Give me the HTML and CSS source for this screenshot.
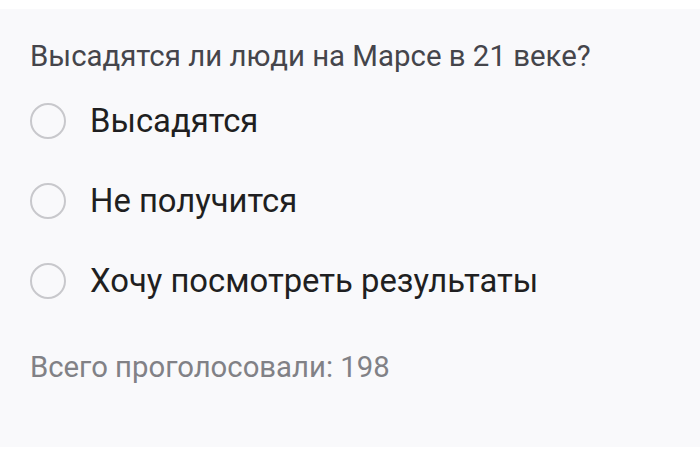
FILE: index.html
```html
<!DOCTYPE html>
<html lang="ru">
<head>
<meta charset="utf-8">
<link rel="stylesheet" href="styles.css">
</head>
<body>
<div class="poll">
  <div class="question">Высадятся ли люди на Марсе в 21 веке?</div>
  <div class="options">
    <div class="option"><span class="radio"></span><span class="label">Высадятся</span></div>
    <div class="option"><span class="radio"></span><span class="label">Не получится</span></div>
    <div class="option"><span class="radio"></span><span class="label">Хочу посмотреть результаты</span></div>
  </div>
  <div class="total">Всего проголосовали: 198</div>
</div>
</body>
</html>
```
FILE: styles.css
```css
html, body {
  margin: 0;
  padding: 0;
  background: #ffffff;
}
body {
  font-family: Roboto, "Noto Sans", sans-serif;
}
.poll {
  margin-top: 9px;
  height: 438px;
  box-sizing: border-box;
  background: #f9f9fb;
  padding: 30px 30px 0 30px;
}
.question {
  font-size: 29.4px;
  line-height: 34px;
  color: #45454b;
  white-space: nowrap;
}
.options {
  margin-top: 30px;
  display: flex;
  flex-direction: column;
  gap: 44px;
}
.option {
  display: flex;
  align-items: center;
  height: 36px;
}
.radio {
  width: 32px;
  height: 32px;
  border: 2px solid #c8c8cc;
  border-radius: 50%;
  flex: none;
}
.label {
  margin-left: 24px;
  font-size: 32.8px;
  color: #1f1f21;
  white-space: nowrap;
}
.total {
  margin-top: 51px;
  font-size: 29.3px;
  line-height: 34px;
  color: #818186;
}
```
